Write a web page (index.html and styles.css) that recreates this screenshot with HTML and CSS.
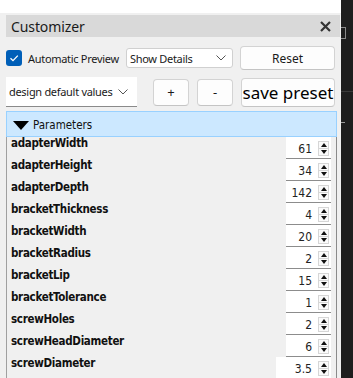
FILE: index.html
```html
<!DOCTYPE html>
<html lang="en">
<head>
  <meta charset="UTF-8">
  <title>Customizer</title>
  <link rel="stylesheet" href="styles.css">
</head>
<body>

<div class="screen">
  <div class="app">
    <div class="topgap"></div>
    <div class="panel">

      <div class="titlebar">
        <span>Customizer</span>
        <svg class="close" width="11" height="11" viewBox="0 0 11 11"><path d="M1 1L10 10M10 1L1 10" stroke="#333" stroke-width="2.2"/></svg>
      </div>

      <div class="row row1">
        <label class="check">
          <span class="box"><svg width="12" height="12" viewBox="0 0 12 12"><path d="M2.5 6.2L5 8.6L9.8 3.6" fill="none" stroke="#fff" stroke-width="1.3"/></svg></span>
          <span>Automatic Preview</span>
        </label>
        <div class="select details">
          <span>Show Details</span>
          <svg width="10" height="6" viewBox="0 0 10 6"><path d="M0.5 0.5L5 5L9.5 0.5" fill="none" stroke="#555" stroke-width="1"/></svg>
        </div>
        <button class="btn reset">Reset</button>
      </div>

      <div class="row row2">
        <div class="select preset">
          <span>design default values</span>
          <svg width="10" height="6" viewBox="0 0 10 6"><path d="M0.5 0.5L5 5L9.5 0.5" fill="none" stroke="#555" stroke-width="1"/></svg>
        </div>
        <button class="btn small plus">+</button>
        <button class="btn small">-</button>
        <button class="btn save">save preset</button>
      </div>

      <div class="group-head">
        <svg width="16" height="9" viewBox="0 0 16 9"><path d="M0 0H16L8 9Z" fill="#000"/></svg>
        Parameters
      </div>

      <div class="param-list">
        <div class="param"><span class="name">adapterWidth</span><div class="spin"><span class="val">61</span><span class="arrows"><i class="up"></i><i class="down"></i></span></div></div>
        <div class="param"><span class="name">adapterHeight</span><div class="spin"><span class="val">34</span><span class="arrows"><i class="up"></i><i class="down"></i></span></div></div>
        <div class="param"><span class="name">adapterDepth</span><div class="spin"><span class="val">142</span><span class="arrows"><i class="up"></i><i class="down"></i></span></div></div>
        <div class="param"><span class="name">bracketThickness</span><div class="spin"><span class="val">4</span><span class="arrows"><i class="up"></i><i class="down"></i></span></div></div>
        <div class="param"><span class="name">bracketWidth</span><div class="spin"><span class="val">20</span><span class="arrows"><i class="up"></i><i class="down"></i></span></div></div>
        <div class="param"><span class="name">bracketRadius</span><div class="spin"><span class="val">2</span><span class="arrows"><i class="up"></i><i class="down"></i></span></div></div>
        <div class="param"><span class="name">bracketLip</span><div class="spin"><span class="val">15</span><span class="arrows"><i class="up"></i><i class="down"></i></span></div></div>
        <div class="param"><span class="name">bracketTolerance</span><div class="spin"><span class="val">1</span><span class="arrows"><i class="up"></i><i class="down"></i></span></div></div>
        <div class="param"><span class="name">screwHoles</span><div class="spin"><span class="val">2</span><span class="arrows"><i class="up"></i><i class="down"></i></span></div></div>
        <div class="param"><span class="name">screwHeadDiameter</span><div class="spin"><span class="val">6</span><span class="arrows"><i class="up"></i><i class="down"></i></span></div></div>
        <div class="param"><span class="name">screwDiameter</span><div class="spin wide"><span class="val">3.5</span><span class="arrows"><i class="up"></i><i class="down"></i></span></div></div>
      </div>

    </div>
  </div>

  <div class="side">
    <div class="bracket"></div>
    <div class="side-line"></div>
    <div class="tick"></div>
  </div>
</div>

</body>
</html>
```

FILE: styles.css
```css
* {
  box-sizing: border-box;
}

body {
  margin: 0;
  background: #fff;
  font-family: 'Noto Sans', sans-serif;
  color: #1b1b1b;
}

.screen {
  display: flex;
  height: 378px;
  overflow: hidden;
}

.app {
  width: 341px;
  display: flex;
  flex-direction: column;
}

.topgap {
  height: 13px;
  background: #fff;
}

.panel {
  flex: 1;
  background: #f0f0f0;
  padding: 2px 0 0 6px;
  overflow: hidden;
}

.titlebar {
  width: 334px;
  height: 22px;
  background: #d9d9d9;
  display: flex;
  align-items: center;
  justify-content: space-between;
  padding: 0 9px 0 5px;
  font-size: 14px;
  letter-spacing: -0.1px;
  color: #1a1a1a;
}

.row {
  display: flex;
  align-items: center;
  white-space: nowrap;
}

.row1 {
  margin-top: 9px;
  height: 24px;
}

.check {
  display: flex;
  align-items: center;
  gap: 6px;
  width: 120px;
  font-size: 11px;
  letter-spacing: -0.3px;
  color: #1a1a1a;
}

.box {
  flex: none;
  width: 16px;
  height: 16px;
  border-radius: 3px;
  background: #005fb8;
  display: flex;
  align-items: center;
  justify-content: center;
}

.select {
  background: #fff;
  display: flex;
  align-items: center;
  justify-content: space-between;
  font-size: 11px;
  letter-spacing: -0.3px;
  color: #1a1a1a;
  overflow: hidden;
}

.details {
  width: 107px;
  height: 20px;
  border: 1px solid #d0d0d0;
  border-radius: 3px;
  padding: 0 6px 0 3px;
}

.btn {
  font-family: 'Noto Sans', sans-serif;
  background: #fdfdfd;
  border: 1px solid #d3d3d3;
  border-bottom-color: #c4c4c4;
  border-radius: 4px;
  color: #1a1a1a;
  padding: 0;
  font-size: 12px;
}

.reset {
  width: 95px;
  height: 24px;
  margin-left: 7px;
}

.row2 {
  margin-top: 7px;
  height: 30px;
}

.preset {
  width: 131px;
  height: 30px;
  border-bottom: 1px solid #8a8a8a;
  padding: 0 9px 0 3px;
}

.small {
  width: 36px;
  height: 27px;
  margin-left: 8px;
  font-size: 13px;
}

.plus {
  margin-left: 16px;
}

.save {
  width: 94px;
  height: 29px;
  margin-left: 8px;
  font-size: 17px;
  color: #000;
}

.group-head {
  margin-top: 4px;
  width: 331px;
  height: 26px;
  background: #cce8ff;
  border: 1px solid #99d1ff;
  display: flex;
  align-items: center;
  gap: 4px;
  padding: 2px 0 0 6px;
  font-family: 'DejaVu Sans Condensed', 'DejaVu Sans', sans-serif;
  font-size: 11.5px;
  color: #111;
}

.param-list {
  width: 331px;
  border-left: 1px solid #a0a0a0;
  border-right: 1px solid #8a8a8a;
}

.param {
  display: flex;
  height: 22px;
}

.name {
  padding-left: 4px;
  line-height: 13px;
  font-family: 'DejaVu Sans Condensed', 'DejaVu Sans', sans-serif;
  font-weight: bold;
  font-size: 11.5px;
  letter-spacing: -0.3px;
  color: #111;
}

.spin {
  margin-left: auto;
  margin-right: 5px;
  width: 45px;
  height: 22px;
  background: #fff;
  border-bottom: 1px solid #8c8c8c;
  display: flex;
  align-items: flex-start;
  justify-content: flex-end;
  padding: 3px 2px 0 0;
}

.spin.wide {
  width: 55px;
}

.val {
  font-family: 'DejaVu Sans Condensed', 'DejaVu Sans', sans-serif;
  font-size: 12px;
  line-height: 18px;
  margin-right: 6px;
  color: #222;
}

.arrows {
  width: 11px;
  height: 15px;
  margin-top: 1px;
  border: 1px solid #d6d6d6;
  display: flex;
  flex-direction: column;
  background: #fafafa;
}

.arrows i {
  flex: 1;
  display: flex;
  justify-content: center;
  align-items: center;
}

.arrows i.up {
  border-bottom: 1px solid #d6d6d6;
}

.arrows i.up::before {
  content: '';
  border-left: 3.5px solid transparent;
  border-right: 3.5px solid transparent;
  border-bottom: 4px solid #111;
}

.arrows i.down::before {
  content: '';
  border-left: 3.5px solid transparent;
  border-right: 3.5px solid transparent;
  border-top: 4px solid #111;
}

.side {
  width: 12px;
  background: #1e1e1e;
  padding-top: 27px;
}

.bracket {
  width: 5px;
  height: 12px;
  border: 1px solid #8a8a8a;
  border-left: none;
}

.side-line {
  margin-top: 52px;
  height: 1px;
  background: #3a3a3a;
}

.tick {
  margin-top: 30px;
  width: 4px;
  height: 1px;
  background: #9a9a9a;
}
```
